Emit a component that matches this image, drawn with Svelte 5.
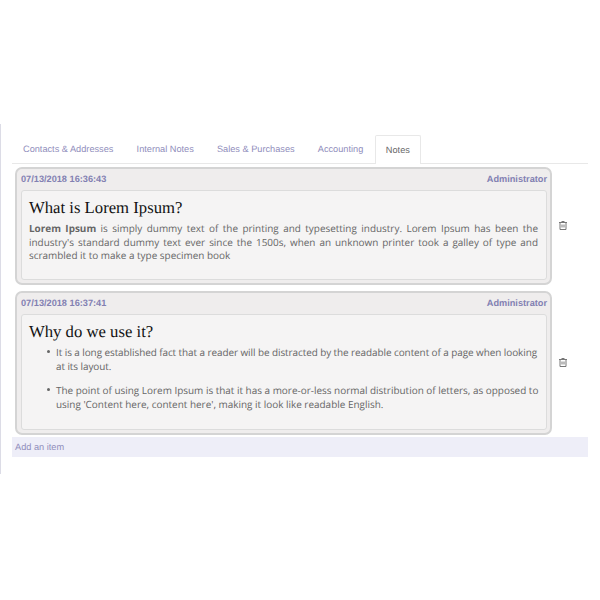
<script>
	const tabs = ['Contacts & Addresses', 'Internal Notes', 'Sales & Purchases', 'Accounting', 'Notes'];
	const active = 'Notes';
</script>

<div class="page">
	<div class="sheet">
		<ul class="tabs">
			{#each tabs as tab}
				<li class="tab" class:active={tab === active}>{tab}</li>
			{/each}
		</ul>

		<div class="row first">
			<div class="card">
				<div class="meta">
					<span>07/13/2018 16:36:43</span>
					<span>Administrator</span>
				</div>
				<div class="body one">
					<h2>What is Lorem Ipsum?</h2>
					<p><strong>Lorem Ipsum</strong> is simply dummy text of the printing and typesetting industry. Lorem Ipsum has been the industry's standard dummy text ever since the 1500s, when an unknown printer took a galley of type and scrambled it to make a type specimen book</p>
				</div>
			</div>
			<button class="trash" aria-label="Delete">
				<svg width="8" height="9" viewBox="0 0 8 9" fill="none" stroke="#777" stroke-width="1">
					<path d="M0 1.5h8M2.8 1.5V.5h2.4v1M1 1.5v7h6v-7M3 3.5v3M5 3.5v3" />
				</svg>
			</button>
		</div>

		<div class="row second">
			<div class="card">
				<div class="meta">
					<span>07/13/2018 16:37:41</span>
					<span>Administrator</span>
				</div>
				<div class="body two">
					<h2>Why do we use it?</h2>
					<ul class="points">
						<li>It is a long established fact that a reader will be distracted by the readable content of a page when looking at its layout.</li>
						<li>The point of using Lorem Ipsum is that it has a more-or-less normal distribution of letters, as opposed to using 'Content here, content here', making it look like readable English.</li>
					</ul>
				</div>
			</div>
			<button class="trash" aria-label="Delete">
				<svg width="8" height="9" viewBox="0 0 8 9" fill="none" stroke="#777" stroke-width="1">
					<path d="M0 1.5h8M2.8 1.5V.5h2.4v1M1 1.5v7h6v-7M3 3.5v3M5 3.5v3" />
				</svg>
			</button>
		</div>

		<div class="add">Add an item</div>
	</div>
</div>

<style>
	:global(body) {
		background: #fff;
	}

	.page {
		width: 600px;
		height: 600px;
		padding-top: 124px;
		box-sizing: border-box;
		overflow: hidden;
	}

	.sheet {
		width: 588px;
		height: 350px;
		box-sizing: border-box;
		padding: 11px 0 0 11px;
		border-left: 1px solid #dcdce6;
		font-family: "Liberation Sans", Arial, sans-serif;
		text-rendering: geometricPrecision;
	}

	.tabs {
		display: flex;
		list-style: none;
		margin: 0;
		padding: 0;
		height: 28px;
		border-bottom: 1px solid #e8e8e8;
	}

	.tab {
		padding: 0 11.6px;
		line-height: 27px;
		margin-top: 1px;
		font-size: 9.2px;
		color: #8f8dbb;
		white-space: nowrap;
	}

	.tab:first-child {
		padding-left: 11px;
	}

	.tab.active {
		margin-top: 0;
		height: 28px;
		line-height: 28px;
		padding: 0 10px;
		background: #fff;
		color: #666;
		border: 1px solid #e8e8e8;
		border-bottom: none;
		border-radius: 2px 2px 0 0;
	}

	.row {
		display: flex;
		align-items: center;
		padding-left: 3px;
	}

	.row.first {
		margin-top: 3px;
	}

	.row.second {
		margin-top: 6px;
	}

	.card {
		width: 537px;
		box-sizing: border-box;
		background: #efeded;
		border: 2px solid #d4d4d4;
		border-radius: 7px;
		padding: 0 3px 3px 4px;
	}

	.meta {
		display: flex;
		justify-content: space-between;
		font-size: 9.2px;
		font-weight: 700;
		color: #8280b2;
		height: 21px;
		line-height: 20px;
	}

	.body {
		box-sizing: border-box;
		background: #f5f4f4;
		border: 1px solid #dcdcdc;
		border-radius: 3px;
		padding: 5px 8px 0 7px;
		color: #666;
		font-family: "Open Sans", sans-serif;
		font-size: 9.95px;
		line-height: 13.5px;
	}

	.body.one {
		height: 90px;
	}

	.body.two {
		height: 116px;
	}

	h2 {
		margin: 0;
		font-family: "Liberation Serif", "Times New Roman", serif;
		font-weight: 400;
		font-size: 16.7px;
		line-height: 24px;
		color: #111;
	}

	p {
		margin: 2px 0 0;
		text-align: justify;
	}

	strong {
		font-weight: 700;
	}

	.points {
		margin: 1px -3px 0 0;
		padding-left: 27px;
		line-height: 14.2px;
		list-style: none;
	}

	.points li {
		position: relative;
	}

	.points li:first-child {
		letter-spacing: -0.07px;
	}

	.points li::before {
		content: '';
		position: absolute;
		left: -9px;
		top: 5px;
		width: 3px;
		height: 3px;
		border-radius: 50%;
		background: #666;
	}

	.points li + li {
		margin-top: 9.5px;
	}

	.trash {
		display: flex;
		background: none;
		border: none;
		padding: 0;
		margin-left: 7px;
		margin-top: -2px;
	}

	.add {
		margin-top: 2px;
		height: 20px;
		line-height: 20px;
		padding-left: 3px;
		background: #eeeef8;
		font-size: 9.2px;
		color: #8f8dbb;
		width: 576px;
		box-sizing: border-box;
	}
</style>
